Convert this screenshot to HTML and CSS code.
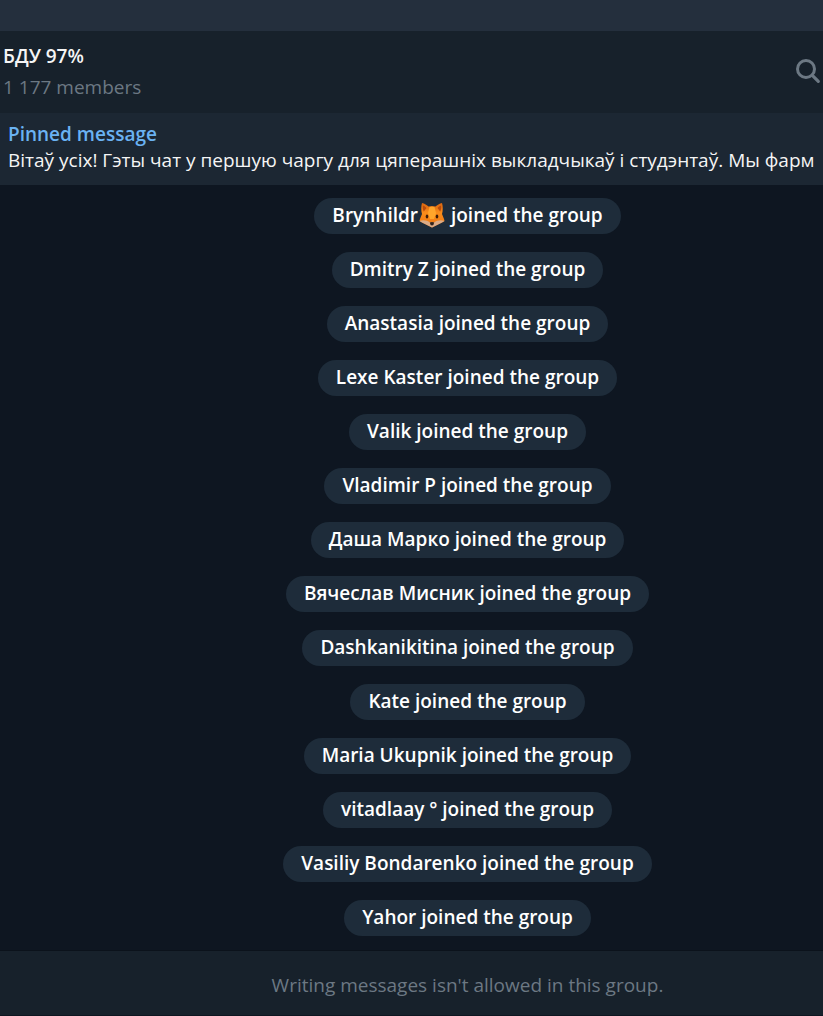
FILE: index.html
```
<!DOCTYPE html>
<html lang="en">
  <head>
    <meta charset="UTF-8" />
    <meta name="viewport" content="width=device-width, initial-scale=1.0" />
    <title>БДУ 97%</title>
    <link rel="stylesheet" href="styles.css">
  </head>

  <body>
    <div class="titlebar"></div>
    <header class="header">
      <div class="chat-info">
        <h1 class="chat-name">БДУ 97%</h1>
        <p class="chat-members">1 177 members</p>
      </div>
      <button class="search" type="button" aria-label="Search">
        <svg width="26" height="26" viewBox="0 0 26 26" fill="none" stroke="#6c7883">
          <circle cx="11" cy="11" r="8.5" stroke-width="3" />
          <path d="M17.3 17.3L23.3 23.3" stroke-width="3.2" stroke-linecap="round" />
        </svg>
      </button>
    </header>
    <a class="pinned" href="#">
      <span class="pinned-title">Pinned message</span>
      <span class="pinned-text">Вітаў усіх! Гэты чат у першую чаргу для цяперашніх выкладчыкаў і студэнтаў. Мы фарм</span>
    </a>
    <main class="messages">
      <div class="message">Brynhildr<svg class="emoji" width="26" height="26" viewBox="0 0 26 26" role="img" aria-label="fox">
          <defs>
            <linearGradient id="fur" x1="0" y1="0" x2="0" y2="1">
              <stop offset="0" stop-color="#d9640f" />
              <stop offset="0.4" stop-color="#f98d1b" />
              <stop offset="1" stop-color="#ee7410" />
            </linearGradient>
          </defs>
          <path d="M3 1C2 4 2 9 3 12L1 17L0.500 19L3 20.500L6 22L10 24L13 25.500L16 24L20 22L23 20.500L25.500 19L25 17L23 12C24 9 24 4 23 1C20.500 1.500 18 3 16.500 4.500Q13 3.500 9.500 4.500C8 3 5.500 1.500 3 1Z" fill="url(#fur)" />
          <path d="M4 3.500C3.500 6 4 8 4.800 9.500L7.500 6C6.500 4.800 5.500 4 4 3.500ZM22 3.500C22.500 6 22 8 21.200 9.500L18.500 6C19.500 4.800 20.500 4 22 3.500Z" fill="#b94b0c" />
          <path d="M10.500 5Q13 4.500 15.500 5L17 11L15 17H11L9 11Z" fill="#ffa62b" />
          <path d="M0.500 19C3.500 17.500 8 18 11 20.500H15C18 18 22.500 17.500 25.500 19L23 20.500L20 22L16 24L13 25.500L10 24L6 22L3 20.500Z" fill="#dbab87" />
          <ellipse cx="8" cy="14.500" rx="1.300" ry="2" fill="#3d1d09" />
          <ellipse cx="18" cy="14.500" rx="1.300" ry="2" fill="#3d1d09" />
          <path d="M10.800 20.500Q13 19.300 15.200 20.500Q15 23 13 23.500Q11 23 10.800 20.500Z" fill="#33241d" />
        </svg> joined the group</div>
      <div class="message">Dmitry Z joined the group</div>
      <div class="message">Anastasia joined the group</div>
      <div class="message">Lexe Kaster joined the group</div>
      <div class="message">Valik joined the group</div>
      <div class="message">Vladimir P joined the group</div>
      <div class="message">Даша Марко joined the group</div>
      <div class="message">Вячеслав Мисник joined the group</div>
      <div class="message">Dashkanikitina joined the group</div>
      <div class="message">Kate joined the group</div>
      <div class="message">Maria Ukupnik joined the group</div>
      <div class="message">vitadlaay ° joined the group</div>
      <div class="message">Vasiliy Bondarenko joined the group</div>
      <div class="message">Yahor joined the group</div>
    </main>
    <footer class="footer">Writing messages isn't allowed in this group.</footer>
  </body>
</html>
```
FILE: styles.css
```
* {
  box-sizing: border-box;
}

body {
  margin: 0;
  min-height: 100vh;
  display: flex;
  flex-direction: column;
  background-color: #0e1621;
  color: #f5f5f5;
  font-family: "Open Sans", sans-serif;
  font-size: 19px;
  line-height: 26px;
}

.titlebar {
  height: 31px;
  background-color: #242f3d;
}

.header {
  display: flex;
  justify-content: space-between;
  align-items: center;
  height: 82px;
  padding: 0 2px 2px 3px;
  background-color: #17212b;
}
.chat-info {
  display: flex;
  flex-direction: column;
  gap: 5px;
}
.chat-name,
.chat-members {
  margin: 0;
  font-size: 19px;
}
.chat-name {
  font-weight: 600;
}
.chat-members {
  color: #6c7883;
}
.search {
  display: flex;
  padding: 0;
  border: 0;
  background: none;
  cursor: pointer;
}

.pinned {
  display: flex;
  flex-direction: column;
  height: 72px;
  padding: 8px 0 0 8px;
  overflow: hidden;
  background-color: #1c2733;
  color: #f5f5f5;
  text-decoration: none;
  white-space: nowrap;
}
.pinned-title {
  color: #6ab2f2;
  font-weight: 600;
}

.messages {
  flex: 1;
  display: flex;
  flex-direction: column;
  align-items: center;
  gap: 18px;
  padding: 13px 0 14px 112px;
}
.message {
  height: 36px;
  padding: 4px 18px;
  border-radius: 18px;
  background-color: #1e2c3a;
  color: #fff;
  font-weight: 600;
}
.emoji {
  margin: 0 1px;
  vertical-align: -6px;
}

.footer {
  height: 66px;
  padding: 21px 0 0 112px;
  border-top: 1px solid #0b121b;
  border-bottom: 1px solid #0e1621;
  background-color: #17212b;
  color: #6c7883;
  text-align: center;
}
```
